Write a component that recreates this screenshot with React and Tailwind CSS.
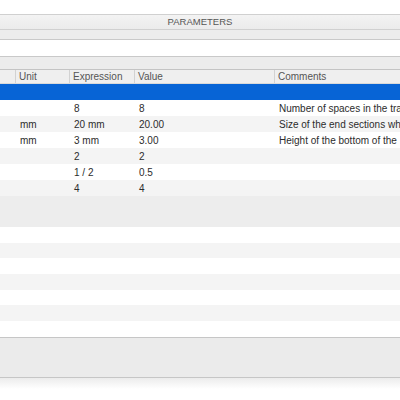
import React from "react";

const rows = [
  { unit: "", expr: "8", value: "8", comment: "Number of spaces in the tra" },
  { unit: "mm", expr: "20 mm", value: "20.00", comment: "Size of the end sections whe" },
  { unit: "mm", expr: "3 mm", value: "3.00", comment: "Height of the bottom of the" },
  { unit: "", expr: "2", value: "2", comment: "" },
  { unit: "", expr: "1 / 2", value: "0.5", comment: "" },
  { unit: "", expr: "4", value: "4", comment: "" },
];

function Row({ r, i }) {
  return (
    <div
      className={`flex h-4 shrink-0 items-center text-[10px] text-[#2c2c2c] whitespace-nowrap overflow-hidden ${
        i % 2 === 0 ? "bg-white" : "bg-[#f4f4f4]"
      }`}
    >
      <div className="w-4 shrink-0" />
      <div className="w-[54px] shrink-0 pl-1">{r.unit}</div>
      <div className="w-[65px] shrink-0 pl-1">{r.expr}</div>
      <div className="w-[140px] shrink-0 pl-1">{r.value}</div>
      <div className="flex-1 pl-1">{r.comment}</div>
    </div>
  );
}

export default function App() {
  const font = { fontFamily: '"Liberation Sans", Arial, sans-serif' };
  return (
    <div style={font} className="w-[400px] h-[400px] bg-white flex flex-col overflow-hidden">
      <div className="h-[14px] shrink-0 bg-white" />

      {/* title bar */}
      <div className="h-4 shrink-0 border-t border-b border-[#d0d0d0] bg-gradient-to-b from-[#f3f3f3] to-[#ebebeb] flex items-center justify-center pt-px">
        <span className="text-[9.5px] text-[#555]">PARAMETERS</span>
      </div>

      {/* toolbar strip */}
      <div className="h-[10px] shrink-0 bg-[#ececec] border-b border-[#c9c9c9]" />

      {/* search field */}
      <div className="h-[17px] shrink-0 bg-white border-b border-[#c9c9c9]" />

      {/* filter strip */}
      <div className="h-[13px] shrink-0 bg-[#ececec] border-b border-[#c4c4c4]" />

      {/* header */}
      <div className="h-[14px] shrink-0 bg-[#efefef] border-b border-[#dadada] flex items-center text-[10px] text-[#555] whitespace-nowrap">
        <div className="w-4 shrink-0 h-full border-r border-[#d2d2d2]" />
        <div className="w-[54px] shrink-0 pl-[3px] h-full flex items-center border-r border-[#d2d2d2]">Unit</div>
        <div className="w-[65px] shrink-0 pl-[3px] h-full flex items-center border-r border-[#d2d2d2]">Expression</div>
        <div className="w-[140px] shrink-0 pl-[3px] h-full flex items-center border-r border-[#d2d2d2]">Value</div>
        <div className="flex-1 pl-[3px]">Comments</div>
      </div>

      {/* selected row */}
      <div className="h-4 shrink-0 bg-[#0764d6]" />

      {rows.map((r, i) => (
        <Row key={i} r={r} i={i} />
      ))}

      {/* group block */}
      <div className="h-[31px] shrink-0 bg-[#ededed]" />

      {/* empty rows */}
      {[0, 1, 2, 3, 4, 5, 6].map((i) => (
        <div key={i} className={`h-[15.7px] shrink-0 ${i % 2 === 0 ? "bg-white" : "bg-[#f4f4f4]"}`} />
      ))}

      {/* footer */}
      <div className="h-[41px] shrink-0 bg-[#ebebeb] border-t border-b border-[#c6c6c6]" />

      <div className="flex-1 bg-gradient-to-b from-[#ececec] via-white to-white" />
    </div>
  );
}
